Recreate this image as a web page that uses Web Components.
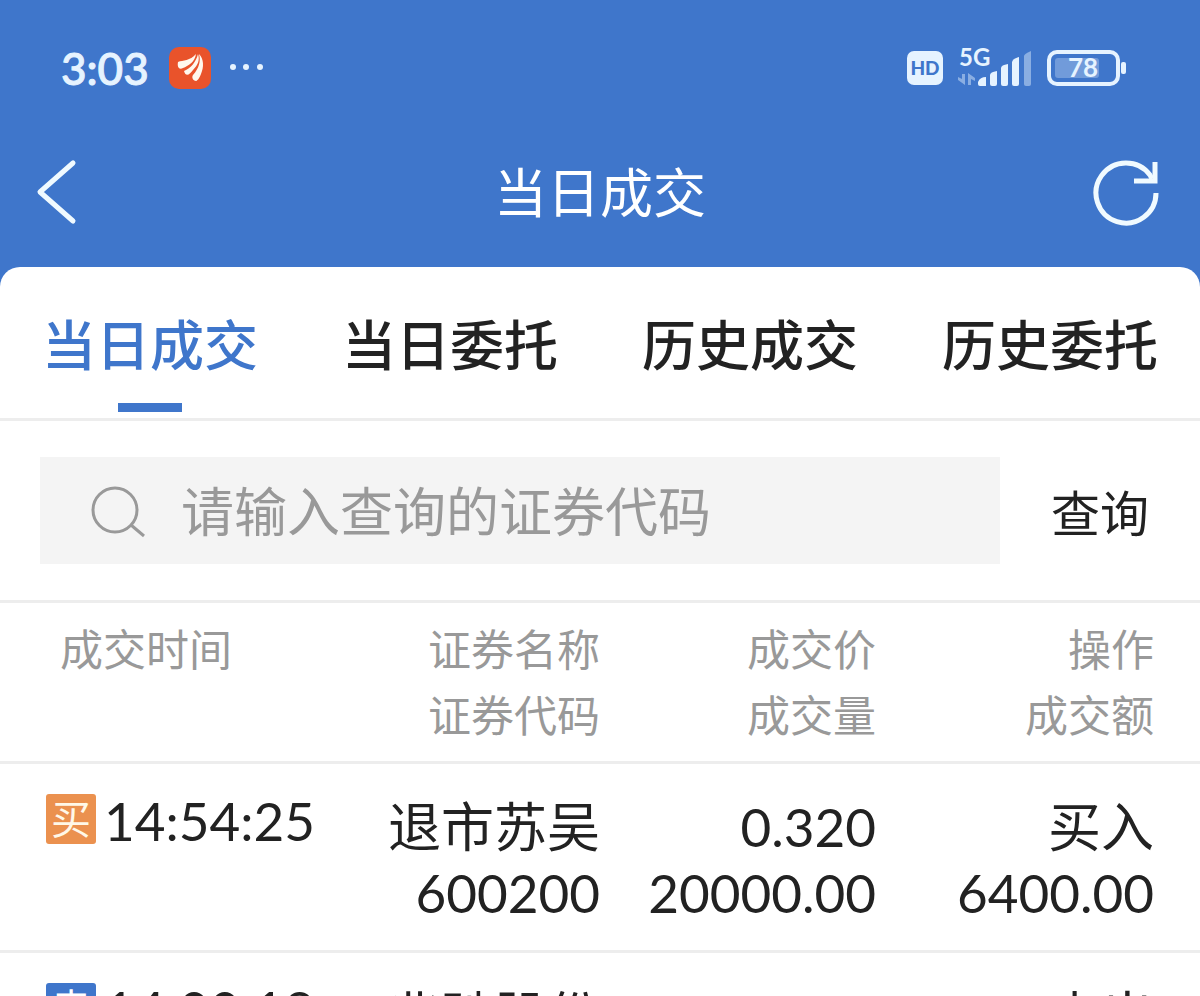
<!DOCTYPE html>
<html lang="zh-CN">
<head>
<meta charset="utf-8">
<meta name="viewport" content="width=device-width, initial-scale=1">
<title>当日成交</title>
<style>
  :root {
    --brand: #3f76cb;
    --text: #222;
    --muted: #999;
    --line: #ededed;
    --field: #f4f4f4;
    --ice: #e6f3ff;
  }

  body {
    background: var(--brand);
    color: var(--text);
    font-family: Lato, "Noto Sans CJK SC", sans-serif;
    margin: 0;
  }
</style>
</head>
<body>
<trade-app>
  <status-bar slot="top" time="3:03" battery="78"></status-bar>
  <nav-bar slot="top">当日成交</nav-bar>
  <tab-bar>
    <tab-item active>当日成交</tab-item>
    <tab-item>当日委托</tab-item>
    <tab-item>历史成交</tab-item>
    <tab-item>历史委托</tab-item>
  </tab-bar>
  <search-bar placeholder="请输入查询的证券代码">查询</search-bar>
  <trade-table></trade-table>
</trade-app>

<script>
const define = (name, render) => customElements.define(name, class extends HTMLElement {
  connectedCallback() {
    if (this.shadowRoot) return
    this.attachShadow({ mode: 'open' }).innerHTML = render(this)
  }
})

define('trade-app', () => `
  <style>
    :host {
      display: flex;
      flex-direction: column;
      height: 100vh;
      overflow: hidden;
    }

    main {
      background: #fff;
      border-radius: 20px 20px 0 0;
      flex: 1;
      margin-top: 17px;
      min-height: 0;
      overflow: hidden;
    }
  </style>

  <slot name="top"></slot>
  <main><slot></slot></main>
`)

define('status-bar', (el) => `
  <style>
    :host {
      align-items: center;
      box-sizing: border-box;
      color: var(--ice);
      display: flex;
      flex: none;
      height: 136px;
      justify-content: space-between;
      padding: 0 74px 0 61px;
    }

    div {
      align-items: center;
      display: flex;
    }

    .left {
      gap: 20px;
    }

    .right {
      gap: 14px;
    }

    time {
      font-size: 44px;
      font-weight: 500;
      -webkit-text-stroke: 1px;
    }

    svg {
      display: block;
      fill: currentColor;
      overflow: visible;
    }

    text {
      font-weight: 700;
    }

    .hd {
      font-weight: 900;
    }
  </style>

  <div class="left">
    <time>${el.getAttribute('time')}</time>
    <svg width="98" height="42" viewBox="0 0 98 42" aria-hidden="true">
      <rect width="42" height="42" rx="10" fill="#e9532b"/>
      <g fill="#fff8ee">
        <path d="M9 15C14 13 21 14 27 7C26 15 19 19 14 21C10 23 8 20 9 15Z"/>
        <path d="M15 24C22 21 27 15 29 7C31 13 29 18 24 23C21 27 17 31 15 24Z"/>
        <path d="M24 28C30 21 32 14 30 7C35 12 35 20 32 27C30 32 28 34 27 34C25 34 22 31 24 28Z"/>
      </g>
      <circle cx="64" cy="20" r="3"/>
      <circle cx="77" cy="20" r="3"/>
      <circle cx="91" cy="20" r="3"/>
    </svg>
  </div>

  <div class="right">
    <svg width="36" height="34" viewBox="0 0 36 34">
      <rect width="36" height="34" rx="7"/>
      <text class="hd" x="18" y="24" text-anchor="middle" font-size="19" fill="#3f76cb">HD</text>
    </svg>
    <svg width="75" height="40" viewBox="0 0 75 40">
      <text x="2" y="18" font-size="24">5G</text>
      <g opacity=".45">
        <path d="M5 26h3v11L1 32V29l4 2z"/>
        <path d="M11 37h3v-6l4 2V30L11 25z"/>
        <path d="M67 8Q67 6 74 3V36Q74 38 72 38H69Q67 38 67 36Z"/>
      </g>
      <path d="M21 34Q23 29 29 29V38H23Q21 38 21 36Z"/>
      <path d="M33 27Q33 24 40 23V36Q40 38 38 38H35Q33 38 33 36Z"/>
      <path d="M44 20Q44 17 51 16V36Q51 38 49 38H46Q44 38 44 36Z"/>
      <path d="M55 14Q56 11 62 9V36Q62 38 60 38H57Q55 38 55 36Z"/>
    </svg>
    <svg width="80" height="36" viewBox="0 0 80 36">
      <rect x="3" y="2" width="69" height="32" rx="8" fill="none" stroke="currentColor" stroke-width="4"/>
      <rect x="9" y="8" width="44" height="20" rx="3" opacity=".3"/>
      <rect x="75" y="12" width="5" height="12" rx="2"/>
      <text x="37" y="27" text-anchor="middle" font-size="26">${el.getAttribute('battery')}</text>
    </svg>
  </div>
`)

define('nav-bar', () => `
  <style>
    :host {
      align-items: center;
      color: #fff;
      display: grid;
      flex: none;
      grid-template-columns: 1fr auto 1fr;
      height: 114px;
      padding: 0 36px;
    }

    h1 {
      font-size: 53px;
      font-weight: 400;
      line-height: 64px;
      margin: 0;
    }

    button {
      background: none;
      border: 0;
      color: #f0faff;
      padding: 0;
    }

    button:last-child {
      justify-self: end;
    }

    button:first-child {
      justify-self: start;
    }

    svg {
      display: block;
      fill: none;
      stroke: currentColor;
      stroke-width: 5;
    }
  </style>

  <button type="button" aria-label="返回">
    <svg width="42" height="68" viewBox="0 0 42 68"><path d="M37 4L4 33L37 62" stroke-linecap="round" stroke-linejoin="round"/></svg>
  </button>
  <h1><slot></slot></h1>
  <button type="button" aria-label="刷新">
    <svg width="72" height="68" viewBox="0 0 72 68">
      <path d="M64 34A30 30 0 1 1 58 16L60 20"/>
      <path d="M63 3V22H42"/>
    </svg>
  </button>
`)

define('tab-bar', () => `
  <style>
    :host {
      border-bottom: 3px solid var(--line);
      display: grid;
      grid-auto-columns: 1fr;
      grid-auto-flow: column;
      height: 151px;
    }
  </style>

  <slot></slot>
`)

define('tab-item', () => `
  <style>
    :host {
      display: flex;
    }

    button {
      align-items: center;
      background: none;
      border: 0;
      color: inherit;
      display: flex;
      flex: 1;
      flex-direction: column;
      font: inherit;
      font-size: 54px;
      font-weight: 500;
      justify-content: space-between;
      line-height: 64px;
      padding: 47px 0 6px;
      white-space: nowrap;
    }

    :host([active]) button {
      color: var(--brand);
    }

    :host([active]) button:after {
      background: var(--brand);
      content: '';
      height: 9px;
      width: 64px;
    }
  </style>

  <button type="button"><slot></slot></button>
`)

define('search-bar', (el) => `
  <style>
    :host {
      display: block;
    }

    form {
      align-items: center;
      border-bottom: 3px solid var(--line);
      display: flex;
      padding: 36px 0 36px 40px;
    }

    label {
      align-items: center;
      background: var(--field);
      display: flex;
      flex: 1;
      gap: 33px;
      height: 107px;
      min-width: 0;
      padding-left: 50px;
    }

    svg {
      fill: none;
      flex: none;
      stroke: var(--muted);
      stroke-width: 3;
    }

    input {
      background: none;
      border: 0;
      color: inherit;
      flex: 1;
      font: inherit;
      font-size: 53px;
      height: 80px;
      min-width: 0;
      outline: 0;
      padding: 2px 0 0;
    }

    input::placeholder {
      color: var(--muted);
      opacity: 1;
    }

    button {
      background: none;
      border: 0;
      color: inherit;
      font: inherit;
      font-size: 49px;
      padding: 0;
      width: 200px;
    }
  </style>

  <form>
    <label>
      <svg width="58" height="54" viewBox="0 0 58 54" aria-hidden="true">
        <circle cx="25" cy="26" r="22"/>
        <path d="M41 41L54 52"/>
      </svg>
      <input type="text" aria-label="${el.getAttribute('placeholder')}" placeholder="${el.getAttribute('placeholder')}">
    </label>
    <button type="button"><slot></slot></button>
  </form>
`)

define('side-badge', () => `
  <style>
    :host {
      background: #eb914f;
      border-radius: 3px;
      color: #fff8e8;
      display: block;
      flex: none;
      font-size: 40px;
      height: 50px;
      line-height: 50px;
      text-align: center;
      width: 50px;
    }

    :host([side="sell"]) {
      background: var(--brand);
      color: #fff;
    }
  </style>

  <slot></slot>
`)

const trades = [
  { side: 'buy', mark: '买', time: '14:54:25', name: '退市苏吴', code: '600200', price: '0.320', volume: '20000.00', action: '买入', amount: '6400.00' },
  { side: 'sell', mark: '卖', time: '14:00:18', name: '兆驰股份', price: '8.210', action: '卖出' }
]

const cell = (first, second = '') => `<td>${first}<br>${second}</td>`

const row = (trade) => `
  <tr>
    <td>
      <div>
        <side-badge side="${trade.side}">${trade.mark}</side-badge>
        <time>${trade.time}</time>
      </div>
    </td>
    ${cell(trade.name, trade.code)}
    ${cell(trade.price, trade.volume)}
    ${cell(trade.action, trade.amount)}
  </tr>
`

define('trade-table', () => `
  <style>
    :host {
      display: block;
    }

    table {
      border-collapse: collapse;
      table-layout: fixed;
      width: 100%;
    }

    th, td {
      border-bottom: 3px solid var(--line);
      box-sizing: border-box;
      line-height: 66px;
      text-align: right;
      vertical-align: top;
      white-space: nowrap;
    }

    th {
      color: var(--muted);
      font-size: 43px;
      font-weight: 400;
      padding: 14px 0 12px;
    }

    td {
      font-size: 53px;
      padding: 30px 0 24px;
    }

    th:first-child {
      padding-left: 60px;
      text-align: left;
    }

    th:last-child, td:last-child {
      padding-right: 46px;
    }

    td:first-child {
      padding-left: 46px;
    }

    div {
      align-items: center;
      display: flex;
      gap: 8px;
      height: 50px;
    }

    time {
      padding-top: 4px;
    }
  </style>

  <table>
    <colgroup>
      <col style="width: 28%">
      <col style="width: 22%">
      <col style="width: 23%">
      <col style="width: 27%">
    </colgroup>
    <thead>
      <tr>
        <th scope="col">成交时间</th>
        <th scope="col">证券名称<br>证券代码</th>
        <th scope="col">成交价<br>成交量</th>
        <th scope="col">操作<br>成交额</th>
      </tr>
    </thead>
    <tbody>${trades.map(row).join('')}</tbody>
  </table>
`)
</script>
</body>
</html>
